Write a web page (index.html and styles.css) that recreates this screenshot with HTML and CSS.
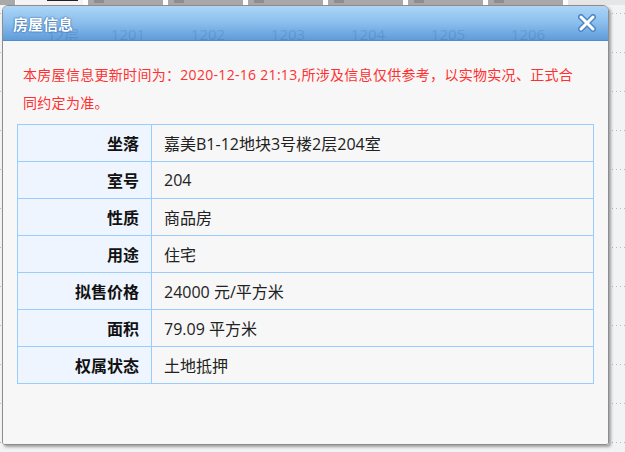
FILE: index.html
```html
<!DOCTYPE html>
<html lang="zh-CN">
<head>
    <meta charset="UTF-8">
    <meta name="viewport" content="width=device-width, initial-scale=1.0">
    <title>房屋信息</title>
    <link rel="stylesheet" href="styles.css">
</head>
<body>
    <div class="backdrop">
        <div class="bg-row bg-row-first">
            <div class="strip">
                <span class="strip-edge"></span>
                <span class="strip-floor"><i></i></span>
                <span class="strip-cell"><i></i></span>
                <span class="strip-cell"><i></i></span>
                <span class="strip-cell"><i></i></span>
                <span class="strip-cell"><i></i></span>
                <span class="strip-cell"><i></i></span>
                <span class="strip-cell"><i></i></span>
            </div>
        </div>
        <div class="bg-row bg-floor">
            <span class="floor-name">12层</span>
            <span class="room">1201</span>
            <span class="room">1202</span>
            <span class="room">1203</span>
            <span class="room">1204</span>
            <span class="room">1205</span>
            <span class="room">1206</span>
        </div>
        <div class="bg-row"></div>
        <div class="bg-row"></div>
        <div class="bg-row"></div>
        <div class="bg-row"></div>
        <div class="bg-row"></div>
        <div class="bg-row"></div>
        <div class="bg-row"></div>
        <div class="bg-row"></div>
        <div class="bg-row"></div>
        <div class="bg-row"></div>
    </div>

    <div class="dialog">
        <div class="dialog-header">
            <span class="dialog-title">房屋信息</span>
            <svg class="dialog-close" width="18" height="18" viewBox="0 0 18 18">
                <path d="M3 3 L15 15 M15 3 L3 15" stroke="#4a86c8" stroke-width="6" stroke-linecap="round"/>
                <path d="M3 3 L15 15 M15 3 L3 15" stroke="#ffffff" stroke-width="3" stroke-linecap="round"/>
            </svg>
        </div>
        <div class="dialog-body">
            <p class="notice">本房屋信息更新时间为：2020-12-16 21:13,所涉及信息仅供参考，以实物实况、正式合同约定为准。</p>
            <table class="info-table">
                <tr><th>坐落</th><td>嘉美B1-12地块3号楼2层204室</td></tr>
                <tr><th>室号</th><td>204</td></tr>
                <tr><th>性质</th><td>商品房</td></tr>
                <tr><th>用途</th><td>住宅</td></tr>
                <tr><th>拟售价格</th><td>24000 元/平方米</td></tr>
                <tr><th>面积</th><td>79.09 平方米</td></tr>
                <tr><th>权属状态</th><td>土地抵押</td></tr>
            </table>
        </div>
    </div>
</body>
</html>
```

FILE: styles.css
```css
body {
    margin: 0;
    height: 452px;
    overflow: hidden;
    background-color: #f2f3f5;
    font-family: "Open Sans", "Noto Sans CJK SC", sans-serif;
}

/* page behind the dialog */
.bg-row {
    height: 38px;
    border-bottom: 1px solid transparent;
    background-image: linear-gradient(to right, #b9b9b9 1px, transparent 1px);
    background-size: 4px 1px;
    background-repeat: repeat-x;
    background-position: left bottom;
}

.bg-row-first {
    height: 14px;
}

.strip {
    display: flex;
    height: 5px;
    background-color: #e6e6e6;
}

.strip-edge {
    width: 15px;
    background-color: #a9a9a9;
    border-right: 1px solid #fff;
}

.strip-floor {
    width: 67px;
    background-color: #f4f4f4;
    border-right: 5px solid #fff;
}

.strip-floor i {
    display: block;
    width: 31px;
    height: 1px;
    margin-left: 31px;
    background-color: #222;
}

.strip-cell {
    width: 75px;
    background-color: #a8a8a8;
    border-right: 5px solid #fff;
}

.strip-cell i {
    display: block;
    width: 10px;
    height: 3px;
    margin-left: 6px;
    background-color: #8e8e8e;
}

.bg-floor {
    display: flex;
    align-items: center;
    color: #3a3a3a;
    font-size: 15px;
}

.floor-name {
    width: 41px;
    padding-left: 47px;
}

.room {
    width: 80px;
    text-align: center;
}

/* dialog */
.dialog {
    position: absolute;
    left: 2px;
    top: 5px;
    display: flex;
    flex-direction: column;
    width: 605px;
    height: 438px;
    border: 1px solid #8d8d8d;
    border-radius: 6px 6px 3px 3px;
    box-shadow: 2px 2px 3px rgba(0, 0, 0, 0.35);
    overflow: hidden;
}

.dialog-header {
    display: flex;
    align-items: center;
    justify-content: space-between;
    height: 34px;
    padding: 0 12px 0 10px;
    border-bottom: 1px solid #4d8dd2;
    background: linear-gradient(rgba(166, 210, 247, 0.9), rgba(126, 184, 236, 0.9) 50%, rgba(84, 148, 216, 0.92));
}

.dialog-title {
    color: #fff;
    font-size: 15px;
    font-weight: bold;
    text-shadow: 0 0 2px #2a64a8, 0 0 1px #2a64a8;
}

.dialog-close {
    display: block;
    margin-top: -1px;
}

.dialog-body {
    flex: 1;
    padding: 0 14px;
    background-color: #f7f7f7;
}

.notice {
    margin: 20px 0 7px;
    padding: 0 12px 0 6px;
    font-size: 14px;
    line-height: 28px;
    letter-spacing: 0.3px;
    color: #ff3030;
}

.info-table {
    width: 100%;
    border-collapse: collapse;
    font-size: 16px;
}

.info-table th,
.info-table td {
    height: 36px;
    padding: 0;
    border: 1px solid #99ccff;
}

.info-table th {
    width: 121px;
    padding-right: 12px;
    text-align: right;
    font-weight: bold;
    color: #111;
    background-color: #eef5fe;
}

.info-table td {
    padding-left: 12px;
    color: #222;
}
```
